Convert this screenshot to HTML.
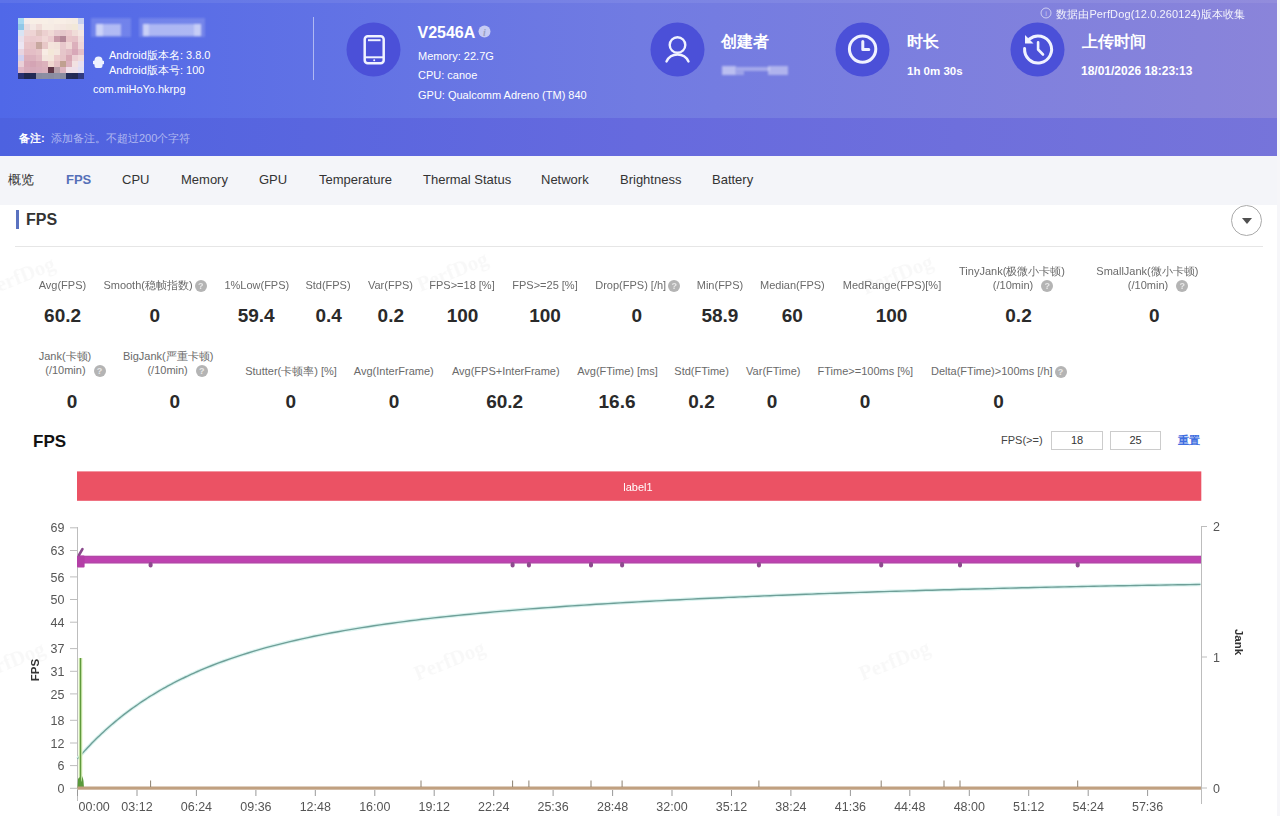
<!DOCTYPE html>
<html><head><meta charset="utf-8">
<style>
*{margin:0;padding:0;box-sizing:border-box}
html,body{width:1280px;height:816px;overflow:hidden;background:#fff;font-family:"Liberation Sans",sans-serif;position:relative}
.a{position:absolute;white-space:nowrap}
#hdr{position:absolute;left:0;top:0;width:1277px;height:118px;background:linear-gradient(90deg,#5068e8 0%,#717be2 50%,#8a84da 100%)}
#note{position:absolute;left:0;top:118px;width:1277px;height:38px;background:linear-gradient(90deg,#4d62e0 0%,#666ade 50%,#7674da 100%)}
#nav{position:absolute;left:0;top:156px;width:1280px;height:49px;background:#f4f5f9}
#rstrip{position:absolute;left:1277px;top:0;width:3px;height:816px;background:#f6f6f9}
.w{color:#fff}
.circ{position:absolute;width:55px;height:55px;border-radius:50%;background:#4a50d8}
.tab{position:absolute;top:172px;font-size:13px;color:#333;line-height:15px}
.lbl{position:absolute;font-size:11px;color:#6a6a6a;line-height:13px;text-align:center;white-space:nowrap}
.val{position:absolute;font-size:19px;font-weight:bold;color:#2a2a2a;line-height:20px;text-align:center;white-space:nowrap}
.q{display:inline-block;width:12px;height:12px;border-radius:50%;background:#b4b4b4;color:#e8e8e8;font-size:9px;line-height:12px;text-align:center;font-weight:bold;vertical-align:0px;margin-left:2px}
</style></head><body>
<div id="hdr"></div>
<div id="note"></div>
<div class="a" style="left:0;top:0;width:1277px;height:3px;background:rgba(255,255,255,.07)"></div>
<div id="nav"></div>
<div id="rstrip"></div>

<!-- avatar -->
<div class="a" style="left:18px;top:18px;width:66px;height:61px;filter:blur(.7px)"><svg width="66" height="61" viewBox="0 0 66 60" preserveAspectRatio="none" shape-rendering="crispEdges" style="display:block"><rect x="0" y="0" width="6" height="6" fill="#a8d8f0"/><rect x="6" y="0" width="6" height="6" fill="#f4ecea"/><rect x="12" y="0" width="6" height="6" fill="#f8efe6"/><rect x="18" y="0" width="6" height="6" fill="#f8eee6"/><rect x="24" y="0" width="6" height="6" fill="#f8efe6"/><rect x="30" y="0" width="6" height="6" fill="#f6ede6"/><rect x="36" y="0" width="6" height="6" fill="#f8efe6"/><rect x="42" y="0" width="6" height="6" fill="#f8eee6"/><rect x="48" y="0" width="6" height="6" fill="#f6ece4"/><rect x="54" y="0" width="6" height="6" fill="#f4ebe4"/><rect x="60" y="0" width="6" height="6" fill="#c8d0f0"/><rect x="0" y="6" width="6" height="6" fill="#90c8e8"/><rect x="6" y="6" width="6" height="6" fill="#e8dce0"/><rect x="12" y="6" width="6" height="6" fill="#f4e8e4"/><rect x="18" y="6" width="6" height="6" fill="#f0dcd8"/><rect x="24" y="6" width="6" height="6" fill="#f6ece4"/><rect x="30" y="6" width="6" height="6" fill="#f6ece4"/><rect x="36" y="6" width="6" height="6" fill="#f4e8e2"/><rect x="42" y="6" width="6" height="6" fill="#f4e6e0"/><rect x="48" y="6" width="6" height="6" fill="#f2e6dc"/><rect x="54" y="6" width="6" height="6" fill="#f2e8d8"/><rect x="60" y="6" width="6" height="6" fill="#e8e4ee"/><rect x="0" y="12" width="6" height="6" fill="#d8e4f4"/><rect x="6" y="12" width="6" height="6" fill="#ecd6d8"/><rect x="12" y="12" width="6" height="6" fill="#eed4d4"/><rect x="18" y="12" width="6" height="6" fill="#e0c4c0"/><rect x="24" y="12" width="6" height="6" fill="#ecd0d0"/><rect x="30" y="12" width="6" height="6" fill="#f0dad6"/><rect x="36" y="12" width="6" height="6" fill="#e8ccd0"/><rect x="42" y="12" width="6" height="6" fill="#e6c8cc"/><rect x="48" y="12" width="6" height="6" fill="#eccccf"/><rect x="54" y="12" width="6" height="6" fill="#f0dcd8"/><rect x="60" y="12" width="6" height="6" fill="#f4e6e2"/><rect x="0" y="18" width="6" height="6" fill="#e8e0ec"/><rect x="6" y="18" width="6" height="6" fill="#ecccd0"/><rect x="12" y="18" width="6" height="6" fill="#eacace"/><rect x="18" y="18" width="6" height="6" fill="#eccccf"/><rect x="24" y="18" width="6" height="6" fill="#f0d8d6"/><rect x="30" y="18" width="6" height="6" fill="#ebcccf"/><rect x="36" y="18" width="6" height="6" fill="#c89aa8"/><rect x="42" y="18" width="6" height="6" fill="#b48898"/><rect x="48" y="18" width="6" height="6" fill="#e8c4c8"/><rect x="54" y="18" width="6" height="6" fill="#e6c2c8"/><rect x="60" y="18" width="6" height="6" fill="#f0dcdc"/><rect x="0" y="24" width="6" height="6" fill="#ece6f2"/><rect x="6" y="24" width="6" height="6" fill="#e8c4c8"/><rect x="12" y="24" width="6" height="6" fill="#e6c2c6"/><rect x="18" y="24" width="6" height="6" fill="#c8a8a0"/><rect x="24" y="24" width="6" height="6" fill="#e8c8c8"/><rect x="30" y="24" width="6" height="6" fill="#f4e4dc"/><rect x="36" y="24" width="6" height="6" fill="#f2e2da"/><rect x="42" y="24" width="6" height="6" fill="#e8c8cc"/><rect x="48" y="24" width="6" height="6" fill="#f0d8d6"/><rect x="54" y="24" width="6" height="6" fill="#dcb0bc"/><rect x="60" y="24" width="6" height="6" fill="#eed6d8"/><rect x="0" y="30" width="6" height="6" fill="#e8d4e0"/><rect x="6" y="30" width="6" height="6" fill="#e4bcc4"/><rect x="12" y="30" width="6" height="6" fill="#e4bec6"/><rect x="18" y="30" width="6" height="6" fill="#e6c4c8"/><rect x="24" y="30" width="6" height="6" fill="#f8ece4"/><rect x="30" y="30" width="6" height="6" fill="#f4e8d8"/><rect x="36" y="30" width="6" height="6" fill="#f4e6de"/><rect x="42" y="30" width="6" height="6" fill="#e6c6ca"/><rect x="48" y="30" width="6" height="6" fill="#e2bcc4"/><rect x="54" y="30" width="6" height="6" fill="#d8a8b8"/><rect x="60" y="30" width="6" height="6" fill="#e4c0c8"/><rect x="0" y="36" width="6" height="6" fill="#d0d0f0"/><rect x="6" y="36" width="6" height="6" fill="#dcb0bc"/><rect x="12" y="36" width="6" height="6" fill="#dcb2be"/><rect x="18" y="36" width="6" height="6" fill="#e2bcc4"/><rect x="24" y="36" width="6" height="6" fill="#f4e6de"/><rect x="30" y="36" width="6" height="6" fill="#f4e6dc"/><rect x="36" y="36" width="6" height="6" fill="#eccccc"/><rect x="42" y="36" width="6" height="6" fill="#e6c4c8"/><rect x="48" y="36" width="6" height="6" fill="#d8a8b4"/><rect x="54" y="36" width="6" height="6" fill="#ecd0d4"/><rect x="60" y="36" width="6" height="6" fill="#f0dcdc"/><rect x="0" y="42" width="6" height="6" fill="#ead0d8"/><rect x="6" y="42" width="6" height="6" fill="#d8a8b8"/><rect x="12" y="42" width="6" height="6" fill="#d4a4b4"/><rect x="18" y="42" width="6" height="6" fill="#d8acb8"/><rect x="24" y="42" width="6" height="6" fill="#dcb2bc"/><rect x="30" y="42" width="6" height="6" fill="#f0d8d0"/><rect x="36" y="42" width="6" height="6" fill="#e4c0c4"/><rect x="42" y="42" width="6" height="6" fill="#c0a090"/><rect x="48" y="42" width="6" height="6" fill="#dcb0bc"/><rect x="54" y="42" width="6" height="6" fill="#f2e2e2"/><rect x="60" y="42" width="6" height="6" fill="#e8e0f0"/><rect x="0" y="48" width="6" height="6" fill="#e0b8c8"/><rect x="6" y="48" width="6" height="6" fill="#d8acbc"/><rect x="12" y="48" width="6" height="6" fill="#d6aaba"/><rect x="18" y="48" width="6" height="6" fill="#d8acbc"/><rect x="24" y="48" width="6" height="6" fill="#dab0bc"/><rect x="30" y="48" width="6" height="6" fill="#603848"/><rect x="36" y="48" width="6" height="6" fill="#b8a0a8"/><rect x="42" y="48" width="6" height="6" fill="#dcb4c0"/><rect x="48" y="48" width="6" height="6" fill="#f0e0e8"/><rect x="54" y="48" width="6" height="6" fill="#eee0ea"/><rect x="60" y="48" width="6" height="6" fill="#e0e0f4"/><rect x="0" y="54" width="6" height="6" fill="#283070"/><rect x="6" y="54" width="6" height="6" fill="#20284f"/><rect x="12" y="54" width="6" height="6" fill="#232a55"/><rect x="18" y="54" width="6" height="6" fill="#8a8ca0"/><rect x="24" y="54" width="6" height="6" fill="#8c8ea2"/><rect x="30" y="54" width="6" height="6" fill="#8a8ca0"/><rect x="36" y="54" width="6" height="6" fill="#8e90a4"/><rect x="42" y="54" width="6" height="6" fill="#8a8ca0"/><rect x="48" y="54" width="6" height="6" fill="#252c58"/><rect x="54" y="54" width="6" height="6" fill="#232a55"/><rect x="60" y="54" width="6" height="6" fill="#303a80"/></svg></div>
<!-- blurred name -->
<div class="a" style="left:91px;top:18px;width:40px;height:19px;background:rgba(255,255,255,.16);filter:blur(.8px)"></div>
<div class="a" style="left:96px;top:24px;width:25px;height:12px;background:rgba(255,255,255,.45);filter:blur(.8px)"></div>
<div class="a" style="left:139px;top:18px;width:66px;height:19px;background:rgba(255,255,255,.16);filter:blur(.8px)"></div>
<div class="a" style="left:143px;top:24px;width:58px;height:12px;background:rgba(255,255,255,.42);filter:blur(.8px)"></div>
<div class="a" style="left:96px;top:24px;width:7px;height:12px;background:rgba(255,255,255,.35);filter:blur(.8px)"></div>
<div class="a" style="left:143px;top:24px;width:6px;height:12px;background:rgba(255,255,255,.35);filter:blur(.8px)"></div>
<div class="a" style="left:194px;top:24px;width:7px;height:12px;background:rgba(255,255,255,.3);filter:blur(.8px)"></div>

<svg class="a" style="left:92px;top:55px;filter:blur(.5px)" width="13" height="14" viewBox="0 0 13 14"><path d="M2.5,5.5 A4,4 0 0 1 10.5,5.5 L12,6 L12,9 L10.5,9.5 L10.5,11 A2,2 0 0 1 8.5,13 L4.5,13 A2,2 0 0 1 2.5,11 L2.5,9.5 L1,9 L1,6 Z" fill="#eef2ff"/></svg>
<div class="a w" style="left:109px;top:48px;font-size:11px;line-height:14px">Android版本名: 3.8.0</div>
<div class="a w" style="left:109px;top:63px;font-size:11px;line-height:14px">Android版本号: 100</div>
<div class="a w" style="left:93px;top:82px;font-size:11px;line-height:14px">com.miHoYo.hkrpg</div>
<div class="a" style="left:313px;top:17px;width:1px;height:63px;background:rgba(255,255,255,0.5)"></div>


<svg class="a" style="left:346px;top:22px" width="55" height="55" viewBox="0 0 55 55"><circle cx="27.5" cy="27.5" r="27" fill="#4b50d8"/>
<rect x="18.7" y="14.2" width="19" height="27" rx="3" fill="none" stroke="#f0f2ff" stroke-width="2.5"/>
<line x1="22" y1="18.2" x2="34.6" y2="18.2" stroke="#f0f2ff" stroke-width="2"/>
<line x1="19" y1="35.3" x2="37.5" y2="35.3" stroke="#f0f2ff" stroke-width="2"/>
<circle cx="28.2" cy="38.3" r="1" fill="#f0f2ff"/></svg>
<svg class="a" style="left:650px;top:22px" width="55" height="55" viewBox="0 0 55 55"><circle cx="27.5" cy="27.5" r="27" fill="#4b50d8"/>
<circle cx="27.5" cy="23" r="7.8" fill="none" stroke="#f0f2ff" stroke-width="2.4"/>
<path d="M16.5,39.5 A12.1,12.1 0 0 1 38.5,39.5" fill="none" stroke="#f0f2ff" stroke-width="2.4" stroke-linecap="round"/></svg>
<svg class="a" style="left:835px;top:22px" width="55" height="55" viewBox="0 0 55 55"><circle cx="27.5" cy="27.5" r="27" fill="#4b50d8"/>
<circle cx="27.6" cy="27.1" r="13.2" fill="none" stroke="#f0f2ff" stroke-width="3"/>
<path d="M27.8,19.5 L27.8,27.5 L33.8,27.5" fill="none" stroke="#f0f2ff" stroke-width="3" stroke-linecap="round" stroke-linejoin="round"/></svg>
<svg class="a" style="left:1010px;top:22px" width="55" height="55" viewBox="0 0 55 55"><circle cx="27.5" cy="27.5" r="27" fill="#4b50d8"/>
<path d="M14.6,26.5 A13.5,13.5 0 1 0 19.5,17" fill="none" stroke="#f0f2ff" stroke-width="3" stroke-linecap="round"/>
<path d="M15,13 L15,21.5 L23.5,21.5 Z" fill="#f0f2ff"/>
<path d="M28.1,20.3 L28.1,27.5 L33,32.5" fill="none" stroke="#f0f2ff" stroke-width="2.6" stroke-linecap="round" stroke-linejoin="round"/></svg>
<svg class="a" style="left:478px;top:25px" width="13" height="13" viewBox="0 0 13 13"><circle cx="6.5" cy="6.5" r="6" fill="rgba(230,232,250,.75)"/><text x="6.5" y="10.5" font-size="10" font-style="italic" font-weight="bold" text-anchor="middle" fill="#9aa0c0" font-family="Liberation Serif">i</text></svg>
<svg class="a" style="left:1040px;top:7px" width="12" height="12" viewBox="0 0 12 12"><circle cx="6" cy="6" r="5" fill="none" stroke="rgba(255,255,255,.6)" stroke-width="1"/><text x="6" y="9" font-size="7" text-anchor="middle" fill="rgba(255,255,255,.6)">i</text></svg>

<div class="a w" style="left:417.5px;top:23.5px;font-size:16px;font-weight:bold;line-height:18px">V2546A</div>
<div class="a w" style="left:418px;top:49px;font-size:11px;line-height:14px">Memory: 22.7G</div>
<div class="a w" style="left:418px;top:68px;font-size:11px;line-height:14px">CPU: canoe</div>
<div class="a w" style="left:418px;top:88px;font-size:11px;line-height:14px">GPU: Qualcomm Adreno (TM) 840</div>


<div class="a w" style="left:721px;top:33px;font-size:16px;font-weight:bold;line-height:18px">创建者</div>

<div class="a" style="left:722px;top:66px;width:14px;height:9px;background:rgba(255,255,255,.5);filter:blur(1px)"></div>
<div class="a" style="left:736px;top:67px;width:34px;height:4px;background:rgba(255,255,255,.35);filter:blur(1px)"></div>
<div class="a" style="left:736px;top:71px;width:8px;height:4px;background:rgba(255,255,255,.3);filter:blur(1px)"></div>
<div class="a" style="left:768px;top:66px;width:20px;height:9px;background:rgba(255,255,255,.42);filter:blur(1px)"></div>
<div class="a w" style="left:907px;top:33px;font-size:16px;font-weight:bold;line-height:18px">时长</div>
<div class="a w" style="left:907px;top:64px;font-size:11.5px;font-weight:bold;line-height:14px">1h 0m 30s</div>

<div class="a w" style="left:1082px;top:33px;font-size:16px;font-weight:bold;line-height:18px">上传时间</div>
<div class="a w" style="left:1081px;top:63.5px;font-size:12px;font-weight:bold;line-height:14px">18/01/2026 18:23:13</div>
<div class="a w" style="left:1056px;top:7px;font-size:11px;line-height:14px;opacity:.9;letter-spacing:.13px">数据由PerfDog(12.0.260124)版本收集</div>

<div class="a w" style="left:19px;top:131px;font-size:11px;font-weight:bold;line-height:14px">备注:</div>
<div class="a" style="left:51px;top:131px;font-size:11px;line-height:14px;color:rgba(255,255,255,.55)">添加备注。不超过200个字符</div>

<!-- tabs -->
<div class="tab" style="left:8px">概览</div>
<div class="tab" style="left:66px;color:#5570b8;font-weight:bold">FPS</div>
<div class="tab" style="left:122px">CPU</div>
<div class="tab" style="left:181px">Memory</div>
<div class="tab" style="left:259px">GPU</div>
<div class="tab" style="left:319px">Temperature</div>
<div class="tab" style="left:423px">Thermal Status</div>
<div class="tab" style="left:541px">Network</div>
<div class="tab" style="left:620px">Brightness</div>
<div class="tab" style="left:712px">Battery</div>

<!-- section title -->
<div class="a" style="left:16px;top:210px;width:3px;height:19px;background:#5a72c0"></div>
<div class="a" style="left:26px;top:211px;font-size:16px;font-weight:bold;color:#333;line-height:18px">FPS</div>
<div class="a" style="left:15px;top:246px;width:1248px;height:1px;background:#e6e6e6"></div>


<!-- dropdown -->
<div class="a" style="left:1231px;top:205px;width:31px;height:31px;border-radius:50%;border:1px solid #aaa;background:#fff"></div>
<div class="a" style="left:1241.5px;top:217.5px;width:0;height:0;border-left:5px solid transparent;border-right:5px solid transparent;border-top:6.5px solid #505050"></div>


<svg class="a" style="left:0;top:0" width="1280" height="816" viewBox="0 0 1280 816" font-family="Liberation Serif, serif">
<g fill="#000" opacity=".028" font-size="21" font-weight="bold" text-anchor="middle">
<text transform="translate(22,283) rotate(-22)">PerfDog</text>
<text transform="translate(455,278) rotate(-22)">PerfDog</text>
<text transform="translate(900,281) rotate(-22)">PerfDog</text>
<text transform="translate(12,668) rotate(-22)">PerfDog</text>
<text transform="translate(452,667) rotate(-22)">PerfDog</text>
<text transform="translate(897,667) rotate(-22)">PerfDog</text>
</g></svg>
<div class="lbl" style="left:-87.6px;top:279.3px;width:300px">Avg(FPS)</div>
<div class="lbl" style="left:5.0px;top:279.3px;width:300px">Smooth(稳帧指数)<span class="q">?</span></div>
<div class="lbl" style="left:106.8px;top:279.3px;width:300px">1%Low(FPS)</div>
<div class="lbl" style="left:178.0px;top:279.3px;width:300px">Std(FPS)</div>
<div class="lbl" style="left:240.5px;top:279.3px;width:300px">Var(FPS)</div>
<div class="lbl" style="left:312.0px;top:279.3px;width:300px">FPS&gt;=18 [%]</div>
<div class="lbl" style="left:395.0px;top:279.3px;width:300px">FPS&gt;=25 [%]</div>
<div class="lbl" style="left:487.7px;top:279.3px;width:300px">Drop(FPS) [/h]<span class="q">?</span></div>
<div class="lbl" style="left:570.0px;top:279.3px;width:300px">Min(FPS)</div>
<div class="lbl" style="left:642.4px;top:279.3px;width:300px">Median(FPS)</div>
<div class="lbl" style="left:742.0px;top:279.3px;width:300px">MedRange(FPS)[%]</div>
<div class="lbl" style="left:862.0px;top:264.7px;width:300px">TinyJank(极微小卡顿)</div>
<div class="lbl" style="left:873.0px;top:279.3px;width:300px">(/10min)<span class="q" style="margin-left:8px">?</span></div>
<div class="lbl" style="left:997.4px;top:264.7px;width:300px">SmallJank(微小卡顿)</div>
<div class="lbl" style="left:1008.0px;top:279.3px;width:300px">(/10min)<span class="q" style="margin-left:8px">?</span></div>
<div class="val" style="left:-37.4px;top:305.5px;width:200px">60.2</div>
<div class="val" style="left:54.8px;top:305.5px;width:200px">0</div>
<div class="val" style="left:156.2px;top:305.5px;width:200px">59.4</div>
<div class="val" style="left:228.6px;top:305.5px;width:200px">0.4</div>
<div class="val" style="left:290.8px;top:305.5px;width:200px">0.2</div>
<div class="val" style="left:362.6px;top:305.5px;width:200px">100</div>
<div class="val" style="left:445.1px;top:305.5px;width:200px">100</div>
<div class="val" style="left:536.8px;top:305.5px;width:200px">0</div>
<div class="val" style="left:619.9px;top:305.5px;width:200px">58.9</div>
<div class="val" style="left:692.3px;top:305.5px;width:200px">60</div>
<div class="val" style="left:791.6px;top:305.5px;width:200px">100</div>
<div class="val" style="left:918.5px;top:305.5px;width:200px">0.2</div>
<div class="val" style="left:1054.4px;top:305.5px;width:200px">0</div>
<div class="lbl" style="left:-85.0px;top:350.2px;width:300px">Jank(卡顿)</div>
<div class="lbl" style="left:-74.6px;top:364.3px;width:300px">(/10min)<span class="q" style="margin-left:8px">?</span></div>
<div class="lbl" style="left:18.2px;top:350.2px;width:300px">BigJank(严重卡顿)</div>
<div class="lbl" style="left:27.6px;top:364.3px;width:300px">(/10min)<span class="q" style="margin-left:8px">?</span></div>
<div class="lbl" style="left:141.0px;top:365.3px;width:300px">Stutter(卡顿率) [%]</div>
<div class="lbl" style="left:243.8px;top:365.3px;width:300px">Avg(InterFrame)</div>
<div class="lbl" style="left:355.8px;top:365.3px;width:300px">Avg(FPS+InterFrame)</div>
<div class="lbl" style="left:467.5px;top:365.3px;width:300px">Avg(FTime) [ms]</div>
<div class="lbl" style="left:551.6px;top:365.3px;width:300px">Std(FTime)</div>
<div class="lbl" style="left:623.3px;top:365.3px;width:300px">Var(FTime)</div>
<div class="lbl" style="left:715.4px;top:365.3px;width:300px">FTime&gt;=100ms [%]</div>
<div class="lbl" style="left:848.8px;top:365.3px;width:300px">Delta(FTime)&gt;100ms [/h]<span class="q">?</span></div>
<div class="val" style="left:-28.0px;top:392.2px;width:200px">0</div>
<div class="val" style="left:74.7px;top:392.2px;width:200px">0</div>
<div class="val" style="left:190.7px;top:392.2px;width:200px">0</div>
<div class="val" style="left:294.0px;top:392.2px;width:200px">0</div>
<div class="val" style="left:404.7px;top:392.2px;width:200px">60.2</div>
<div class="val" style="left:517.0px;top:392.2px;width:200px">16.6</div>
<div class="val" style="left:601.5px;top:392.2px;width:200px">0.2</div>
<div class="val" style="left:672.0px;top:392.2px;width:200px">0</div>
<div class="val" style="left:765.0px;top:392.2px;width:200px">0</div>
<div class="val" style="left:898.5px;top:392.2px;width:200px">0</div>

<div class="a" style="left:33px;top:432px;font-size:17px;font-weight:bold;color:#111;line-height:20px">FPS</div>
<div class="a" style="left:1001px;top:434px;font-size:11px;color:#444;line-height:13px">FPS(&gt;=)</div>
<div class="a" style="left:1051px;top:431px;width:52px;height:19px;border:1px solid #ccc;font-size:11px;color:#333;text-align:center;line-height:17px">18</div>
<div class="a" style="left:1110px;top:431px;width:51px;height:19px;border:1px solid #ccc;font-size:11px;color:#333;text-align:center;line-height:17px">25</div>
<div class="a" style="left:1178px;top:434px;font-size:11px;color:#3f6ee0;font-weight:bold;line-height:13px">重置</div>

<svg class="a" style="left:0;top:0" width="1280" height="816" viewBox="0 0 1280 816" font-family="Liberation Sans, sans-serif">
<rect x="77" y="471.4" width="1124.3" height="29.4" fill="#eb5264"/>
<text x="638" y="491" fill="#fff" font-size="11" text-anchor="middle">label1</text>
<line x1="77.5" y1="527" x2="77.5" y2="801" stroke="#bdbdbd" stroke-width="1"/>
<line x1="1201.5" y1="526" x2="1201.5" y2="804" stroke="#bdbdbd" stroke-width="1"/>
<line x1="70" y1="788.3" x2="77" y2="788.3" stroke="#bdbdbd"/>
<text x="64.5" y="792.9" fill="#555" font-size="12.5" text-anchor="end">0</text>
<line x1="70" y1="765.6" x2="77" y2="765.6" stroke="#bdbdbd"/>
<text x="64.5" y="770.2" fill="#555" font-size="12.5" text-anchor="end">6</text>
<line x1="70" y1="743.0" x2="77" y2="743.0" stroke="#bdbdbd"/>
<text x="64.5" y="747.6" fill="#555" font-size="12.5" text-anchor="end">12</text>
<line x1="70" y1="720.3" x2="77" y2="720.3" stroke="#bdbdbd"/>
<text x="64.5" y="724.9" fill="#555" font-size="12.5" text-anchor="end">18</text>
<line x1="70" y1="693.9" x2="77" y2="693.9" stroke="#bdbdbd"/>
<text x="64.5" y="698.5" fill="#555" font-size="12.5" text-anchor="end">25</text>
<line x1="70" y1="671.3" x2="77" y2="671.3" stroke="#bdbdbd"/>
<text x="64.5" y="675.9" fill="#555" font-size="12.5" text-anchor="end">31</text>
<line x1="70" y1="648.6" x2="77" y2="648.6" stroke="#bdbdbd"/>
<text x="64.5" y="653.2" fill="#555" font-size="12.5" text-anchor="end">37</text>
<line x1="70" y1="622.2" x2="77" y2="622.2" stroke="#bdbdbd"/>
<text x="64.5" y="626.8" fill="#555" font-size="12.5" text-anchor="end">44</text>
<line x1="70" y1="599.5" x2="77" y2="599.5" stroke="#bdbdbd"/>
<text x="64.5" y="604.1" fill="#555" font-size="12.5" text-anchor="end">50</text>
<line x1="70" y1="576.9" x2="77" y2="576.9" stroke="#bdbdbd"/>
<text x="64.5" y="581.5" fill="#555" font-size="12.5" text-anchor="end">56</text>
<line x1="70" y1="550.5" x2="77" y2="550.5" stroke="#bdbdbd"/>
<text x="64.5" y="555.1" fill="#555" font-size="12.5" text-anchor="end">63</text>
<line x1="70" y1="527.8" x2="77" y2="527.8" stroke="#bdbdbd"/>
<text x="64.5" y="532.4" fill="#555" font-size="12.5" text-anchor="end">69</text>
<line x1="1201" y1="526.5" x2="1207" y2="526.5" stroke="#bdbdbd"/>
<text x="1213" y="531.1" fill="#555" font-size="12.5">2</text>
<line x1="1201" y1="657" x2="1207" y2="657" stroke="#bdbdbd"/>
<text x="1213" y="661.6" fill="#555" font-size="12.5">1</text>
<line x1="1201" y1="788" x2="1207" y2="788" stroke="#bdbdbd"/>
<text x="1213" y="792.6" fill="#555" font-size="12.5">0</text>
<text transform="translate(39,670) rotate(-90)" fill="#333" font-size="11.5" font-weight="bold" text-anchor="middle">FPS</text>
<text transform="translate(1235,642) rotate(90)" fill="#333" font-size="11.5" font-weight="bold" text-anchor="middle">Jank</text>
<line x1="77.5" y1="790" x2="77.5" y2="796" stroke="#999"/>
<text x="78.5" y="811" fill="#555" font-size="12.5">00:00</text>
<line x1="137.0" y1="790" x2="137.0" y2="796" stroke="#999"/>
<text x="137.0" y="811" fill="#555" font-size="12.5" text-anchor="middle">03:12</text>
<line x1="196.4" y1="790" x2="196.4" y2="796" stroke="#999"/>
<text x="196.4" y="811" fill="#555" font-size="12.5" text-anchor="middle">06:24</text>
<line x1="255.9" y1="790" x2="255.9" y2="796" stroke="#999"/>
<text x="255.9" y="811" fill="#555" font-size="12.5" text-anchor="middle">09:36</text>
<line x1="315.3" y1="790" x2="315.3" y2="796" stroke="#999"/>
<text x="315.3" y="811" fill="#555" font-size="12.5" text-anchor="middle">12:48</text>
<line x1="374.8" y1="790" x2="374.8" y2="796" stroke="#999"/>
<text x="374.8" y="811" fill="#555" font-size="12.5" text-anchor="middle">16:00</text>
<line x1="434.2" y1="790" x2="434.2" y2="796" stroke="#999"/>
<text x="434.2" y="811" fill="#555" font-size="12.5" text-anchor="middle">19:12</text>
<line x1="493.7" y1="790" x2="493.7" y2="796" stroke="#999"/>
<text x="493.7" y="811" fill="#555" font-size="12.5" text-anchor="middle">22:24</text>
<line x1="553.1" y1="790" x2="553.1" y2="796" stroke="#999"/>
<text x="553.1" y="811" fill="#555" font-size="12.5" text-anchor="middle">25:36</text>
<line x1="612.6" y1="790" x2="612.6" y2="796" stroke="#999"/>
<text x="612.6" y="811" fill="#555" font-size="12.5" text-anchor="middle">28:48</text>
<line x1="672.0" y1="790" x2="672.0" y2="796" stroke="#999"/>
<text x="672.0" y="811" fill="#555" font-size="12.5" text-anchor="middle">32:00</text>
<line x1="731.5" y1="790" x2="731.5" y2="796" stroke="#999"/>
<text x="731.5" y="811" fill="#555" font-size="12.5" text-anchor="middle">35:12</text>
<line x1="790.9" y1="790" x2="790.9" y2="796" stroke="#999"/>
<text x="790.9" y="811" fill="#555" font-size="12.5" text-anchor="middle">38:24</text>
<line x1="850.4" y1="790" x2="850.4" y2="796" stroke="#999"/>
<text x="850.4" y="811" fill="#555" font-size="12.5" text-anchor="middle">41:36</text>
<line x1="909.8" y1="790" x2="909.8" y2="796" stroke="#999"/>
<text x="909.8" y="811" fill="#555" font-size="12.5" text-anchor="middle">44:48</text>
<line x1="969.3" y1="790" x2="969.3" y2="796" stroke="#999"/>
<text x="969.3" y="811" fill="#555" font-size="12.5" text-anchor="middle">48:00</text>
<line x1="1028.7" y1="790" x2="1028.7" y2="796" stroke="#999"/>
<text x="1028.7" y="811" fill="#555" font-size="12.5" text-anchor="middle">51:12</text>
<line x1="1088.2" y1="790" x2="1088.2" y2="796" stroke="#999"/>
<text x="1088.2" y="811" fill="#555" font-size="12.5" text-anchor="middle">54:24</text>
<line x1="1147.6" y1="790" x2="1147.6" y2="796" stroke="#999"/>
<text x="1147.6" y="811" fill="#555" font-size="12.5" text-anchor="middle">57:36</text>
<path d="M77.5,758.9 L79.5,756.6 L81.5,754.4 L83.5,752.1 L85.5,749.9 L87.5,747.8 L89.5,745.7 L91.5,743.6 L93.5,741.6 L95.5,739.6 L97.5,737.6 L99.5,735.7 L101.5,733.8 L103.5,731.9 L105.5,730.1 L107.5,728.3 L109.5,726.5 L111.5,724.8 L113.5,723.1 L115.5,721.4 L117.5,719.7 L119.5,718.1 L121.5,716.5 L123.5,714.9 L125.5,713.4 L127.5,711.9 L129.5,710.4 L131.5,708.9 L133.5,707.5 L135.5,706.1 L137.5,704.7 L139.5,703.3 L141.5,701.9 L143.5,700.6 L145.5,699.3 L147.5,698.0 L149.5,696.7 L151.5,695.5 L153.5,694.3 L155.5,693.1 L157.5,691.9 L159.5,690.7 L161.5,689.5 L163.5,688.4 L165.5,687.3 L167.5,686.2 L169.5,685.1 L171.5,684.0 L173.5,683.0 L175.5,681.9 L177.5,680.9 L179.5,679.9 L181.5,678.9 L183.5,678.0 L185.5,677.0 L187.5,676.1 L189.5,675.1 L191.5,674.2 L193.5,673.3 L195.5,672.4 L197.5,671.5 L199.5,670.7 L200.0,670.4 L206.0,667.9 L212.0,665.5 L218.0,663.2 L224.0,661.0 L230.0,658.9 L236.0,656.8 L242.0,654.9 L248.0,653.0 L254.0,651.2 L260.0,649.4 L266.0,647.7 L272.0,646.1 L278.0,644.6 L284.0,643.1 L290.0,641.6 L296.0,640.2 L302.0,638.9 L308.0,637.6 L314.0,636.3 L320.0,635.1 L326.0,633.9 L332.0,632.8 L338.0,631.7 L344.0,630.6 L350.0,629.6 L356.0,628.6 L362.0,627.6 L368.0,626.7 L374.0,625.8 L380.0,624.9 L386.0,624.0 L392.0,623.2 L398.0,622.4 L404.0,621.6 L410.0,620.8 L416.0,620.1 L422.0,619.3 L428.0,618.6 L434.0,617.9 L440.0,617.3 L446.0,616.6 L452.0,616.0 L458.0,615.4 L464.0,614.7 L470.0,614.2 L476.0,613.6 L482.0,613.0 L488.0,612.5 L494.0,611.9 L500.0,611.4 L506.0,610.9 L512.0,610.4 L518.0,609.9 L524.0,609.4 L530.0,608.9 L536.0,608.5 L542.0,608.0 L548.0,607.6 L554.0,607.2 L560.0,606.7 L566.0,606.3 L572.0,605.9 L578.0,605.5 L584.0,605.1 L590.0,604.7 L596.0,604.3 L602.0,604.0 L608.0,603.6 L614.0,603.2 L620.0,602.9 L626.0,602.5 L632.0,602.2 L638.0,601.9 L644.0,601.5 L650.0,601.2 L656.0,600.9 L662.0,600.6 L668.0,600.3 L674.0,600.0 L680.0,599.7 L686.0,599.4 L692.0,599.1 L698.0,598.8 L704.0,598.5 L710.0,598.2 L716.0,598.0 L722.0,597.7 L728.0,597.4 L734.0,597.2 L740.0,596.9 L746.0,596.7 L752.0,596.4 L758.0,596.2 L764.0,595.9 L770.0,595.7 L776.0,595.4 L782.0,595.2 L788.0,595.0 L794.0,594.7 L800.0,594.5 L806.0,594.3 L812.0,594.1 L818.0,593.8 L824.0,593.6 L830.0,593.4 L836.0,593.2 L842.0,593.0 L848.0,592.8 L854.0,592.6 L860.0,592.4 L866.0,592.2 L872.0,592.0 L878.0,591.8 L884.0,591.6 L890.0,591.4 L896.0,591.2 L902.0,591.1 L908.0,590.9 L914.0,590.7 L920.0,590.5 L926.0,590.3 L932.0,590.2 L938.0,590.0 L944.0,589.8 L950.0,589.7 L956.0,589.5 L962.0,589.3 L968.0,589.2 L974.0,589.0 L980.0,588.9 L986.0,588.7 L992.0,588.6 L998.0,588.4 L1004.0,588.3 L1010.0,588.1 L1016.0,588.0 L1022.0,587.8 L1028.0,587.7 L1034.0,587.5 L1040.0,587.4 L1046.0,587.3 L1052.0,587.1 L1058.0,587.0 L1064.0,586.9 L1070.0,586.8 L1076.0,586.6 L1082.0,586.5 L1088.0,586.4 L1094.0,586.3 L1100.0,586.1 L1106.0,586.0 L1112.0,585.9 L1118.0,585.8 L1124.0,585.7 L1130.0,585.6 L1136.0,585.5 L1142.0,585.4 L1148.0,585.3 L1154.0,585.2 L1160.0,585.1 L1166.0,585.0 L1172.0,584.9 L1178.0,584.8 L1184.0,584.7 L1190.0,584.6 L1196.0,584.5 L1200.5,584.4" fill="none" stroke="#daf3ef" stroke-width="3.6"/>
<path d="M77.5,758.9 L79.5,756.6 L81.5,754.4 L83.5,752.1 L85.5,749.9 L87.5,747.8 L89.5,745.7 L91.5,743.6 L93.5,741.6 L95.5,739.6 L97.5,737.6 L99.5,735.7 L101.5,733.8 L103.5,731.9 L105.5,730.1 L107.5,728.3 L109.5,726.5 L111.5,724.8 L113.5,723.1 L115.5,721.4 L117.5,719.7 L119.5,718.1 L121.5,716.5 L123.5,714.9 L125.5,713.4 L127.5,711.9 L129.5,710.4 L131.5,708.9 L133.5,707.5 L135.5,706.1 L137.5,704.7 L139.5,703.3 L141.5,701.9 L143.5,700.6 L145.5,699.3 L147.5,698.0 L149.5,696.7 L151.5,695.5 L153.5,694.3 L155.5,693.1 L157.5,691.9 L159.5,690.7 L161.5,689.5 L163.5,688.4 L165.5,687.3 L167.5,686.2 L169.5,685.1 L171.5,684.0 L173.5,683.0 L175.5,681.9 L177.5,680.9 L179.5,679.9 L181.5,678.9 L183.5,678.0 L185.5,677.0 L187.5,676.1 L189.5,675.1 L191.5,674.2 L193.5,673.3 L195.5,672.4 L197.5,671.5 L199.5,670.7 L200.0,670.4 L206.0,667.9 L212.0,665.5 L218.0,663.2 L224.0,661.0 L230.0,658.9 L236.0,656.8 L242.0,654.9 L248.0,653.0 L254.0,651.2 L260.0,649.4 L266.0,647.7 L272.0,646.1 L278.0,644.6 L284.0,643.1 L290.0,641.6 L296.0,640.2 L302.0,638.9 L308.0,637.6 L314.0,636.3 L320.0,635.1 L326.0,633.9 L332.0,632.8 L338.0,631.7 L344.0,630.6 L350.0,629.6 L356.0,628.6 L362.0,627.6 L368.0,626.7 L374.0,625.8 L380.0,624.9 L386.0,624.0 L392.0,623.2 L398.0,622.4 L404.0,621.6 L410.0,620.8 L416.0,620.1 L422.0,619.3 L428.0,618.6 L434.0,617.9 L440.0,617.3 L446.0,616.6 L452.0,616.0 L458.0,615.4 L464.0,614.7 L470.0,614.2 L476.0,613.6 L482.0,613.0 L488.0,612.5 L494.0,611.9 L500.0,611.4 L506.0,610.9 L512.0,610.4 L518.0,609.9 L524.0,609.4 L530.0,608.9 L536.0,608.5 L542.0,608.0 L548.0,607.6 L554.0,607.2 L560.0,606.7 L566.0,606.3 L572.0,605.9 L578.0,605.5 L584.0,605.1 L590.0,604.7 L596.0,604.3 L602.0,604.0 L608.0,603.6 L614.0,603.2 L620.0,602.9 L626.0,602.5 L632.0,602.2 L638.0,601.9 L644.0,601.5 L650.0,601.2 L656.0,600.9 L662.0,600.6 L668.0,600.3 L674.0,600.0 L680.0,599.7 L686.0,599.4 L692.0,599.1 L698.0,598.8 L704.0,598.5 L710.0,598.2 L716.0,598.0 L722.0,597.7 L728.0,597.4 L734.0,597.2 L740.0,596.9 L746.0,596.7 L752.0,596.4 L758.0,596.2 L764.0,595.9 L770.0,595.7 L776.0,595.4 L782.0,595.2 L788.0,595.0 L794.0,594.7 L800.0,594.5 L806.0,594.3 L812.0,594.1 L818.0,593.8 L824.0,593.6 L830.0,593.4 L836.0,593.2 L842.0,593.0 L848.0,592.8 L854.0,592.6 L860.0,592.4 L866.0,592.2 L872.0,592.0 L878.0,591.8 L884.0,591.6 L890.0,591.4 L896.0,591.2 L902.0,591.1 L908.0,590.9 L914.0,590.7 L920.0,590.5 L926.0,590.3 L932.0,590.2 L938.0,590.0 L944.0,589.8 L950.0,589.7 L956.0,589.5 L962.0,589.3 L968.0,589.2 L974.0,589.0 L980.0,588.9 L986.0,588.7 L992.0,588.6 L998.0,588.4 L1004.0,588.3 L1010.0,588.1 L1016.0,588.0 L1022.0,587.8 L1028.0,587.7 L1034.0,587.5 L1040.0,587.4 L1046.0,587.3 L1052.0,587.1 L1058.0,587.0 L1064.0,586.9 L1070.0,586.8 L1076.0,586.6 L1082.0,586.5 L1088.0,586.4 L1094.0,586.3 L1100.0,586.1 L1106.0,586.0 L1112.0,585.9 L1118.0,585.8 L1124.0,585.7 L1130.0,585.6 L1136.0,585.5 L1142.0,585.4 L1148.0,585.3 L1154.0,585.2 L1160.0,585.1 L1166.0,585.0 L1172.0,584.9 L1178.0,584.8 L1184.0,584.7 L1190.0,584.6 L1196.0,584.5 L1200.5,584.4" fill="none" stroke="#6f9f98" stroke-width="1.4"/>
<rect x="77.5" y="555.8" width="1123.5" height="7.6" fill="#be42b0"/>
<rect x="77.5" y="555.8" width="1123.5" height="1.2" fill="#a94ca0" opacity=".6"/>
<rect x="77.5" y="562.2" width="1123.5" height="1.2" fill="#a94ca0" opacity=".6"/>
<rect x="77" y="555.5" width="7.6" height="12" rx="1" fill="#b33fa6"/>
<path d="M79,555 L82.5,549" stroke="#8a4a8c" stroke-width="2.5" stroke-linecap="round"/>
<rect x="148.6" y="562" width="4" height="5.4" rx="2" fill="#8f4a8f"/>
<rect x="510.6" y="562" width="4" height="5.4" rx="2" fill="#8f4a8f"/>
<rect x="526.9" y="562" width="4" height="5.4" rx="2" fill="#8f4a8f"/>
<rect x="589.0" y="562" width="4" height="5.4" rx="2" fill="#8f4a8f"/>
<rect x="620.1" y="562" width="4" height="5.4" rx="2" fill="#8f4a8f"/>
<rect x="756.9" y="562" width="4" height="5.4" rx="2" fill="#8f4a8f"/>
<rect x="879.2" y="562" width="4" height="5.4" rx="2" fill="#8f4a8f"/>
<rect x="958.0" y="562" width="4" height="5.4" rx="2" fill="#8f4a8f"/>
<rect x="1075.7" y="562" width="4" height="5.4" rx="2" fill="#8f4a8f"/>
<line x1="80.5" y1="658" x2="80.5" y2="788" stroke="#e6f7c8" stroke-width="4"/>
<line x1="80.5" y1="658" x2="80.5" y2="788" stroke="#5f9a3c" stroke-width="1.6"/>
<path d="M77.5,788 L78,779 L79.5,777 L81.5,782 L82.5,776 L83.5,781 L84,788 Z" fill="#5a9a3c"/>
<rect x="77.5" y="786.5" width="1123.5" height="3.2" fill="#c0a080"/>
<line x1="150.6" y1="780.5" x2="150.6" y2="787" stroke="#8d8070" stroke-width="1"/>
<line x1="421.0" y1="780.5" x2="421.0" y2="787" stroke="#8d8070" stroke-width="1"/>
<line x1="512.6" y1="780.5" x2="512.6" y2="787" stroke="#8d8070" stroke-width="1"/>
<line x1="528.9" y1="780.5" x2="528.9" y2="787" stroke="#8d8070" stroke-width="1"/>
<line x1="591.0" y1="780.5" x2="591.0" y2="787" stroke="#8d8070" stroke-width="1"/>
<line x1="622.1" y1="780.5" x2="622.1" y2="787" stroke="#8d8070" stroke-width="1"/>
<line x1="758.9" y1="780.5" x2="758.9" y2="787" stroke="#8d8070" stroke-width="1"/>
<line x1="881.2" y1="780.5" x2="881.2" y2="787" stroke="#8d8070" stroke-width="1"/>
<line x1="944.0" y1="780.5" x2="944.0" y2="787" stroke="#8d8070" stroke-width="1"/>
<line x1="960.0" y1="780.5" x2="960.0" y2="787" stroke="#8d8070" stroke-width="1"/>
<line x1="1077.7" y1="780.5" x2="1077.7" y2="787" stroke="#8d8070" stroke-width="1"/>
</svg>
</body></html>
